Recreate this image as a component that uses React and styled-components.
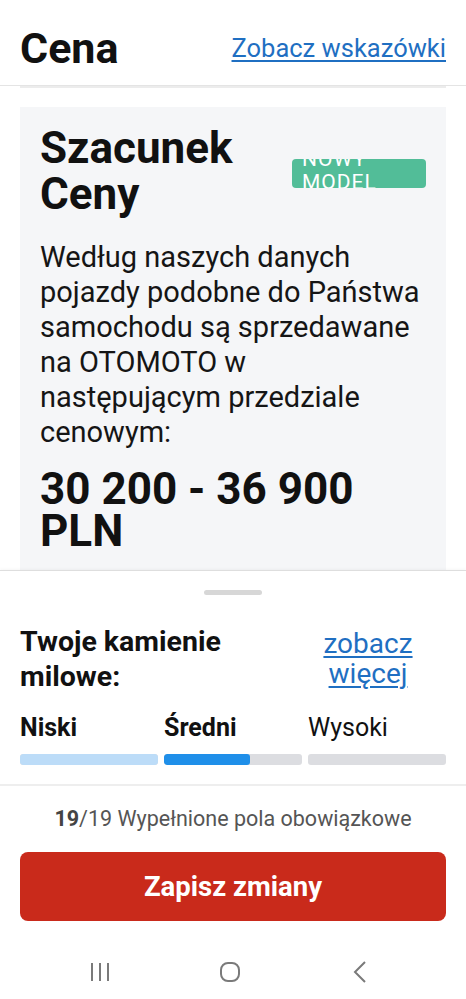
import React from "react";
import styled, { createGlobalStyle } from "styled-components";

const GlobalStyle = createGlobalStyle`
  body {
    margin: 0;
    background: #ffffff;
    font-family: Roboto, "Noto Sans", sans-serif;
    color: #111111;
  }
`;

const Screen = styled.div`
  width: 466px;
  height: 999px;
  display: flex;
  flex-direction: column;
  overflow: hidden;
`;

const Scroll = styled.div`
  flex: 1 1 auto;
  min-height: 0;
  overflow: hidden;
`;

const Header = styled.div`
  height: 86px;
  box-sizing: border-box;
  padding: 12px 20px 2px;
  display: flex;
  align-items: center;
  justify-content: space-between;
  border-bottom: 1px solid #e4e4e4;
`;

const PageTitle = styled.h1`
  margin: 0;
  font-size: 43px;
  font-weight: 700;
  line-height: 50px;
  color: #111;
`;

const Link = styled.a`
  color: #1f6fc2;
  text-decoration: underline;
  text-underline-offset: 3px;
  text-decoration-thickness: 1.5px;
  font-size: ${(p) => p.size || 25.5}px;
  line-height: ${(p) => p.lh || 30}px;
  text-align: ${(p) => p.align || "left"};
`;

const CardEdge = styled.div`
  margin: 0 20px;
  height: 2px;
  background: #ececec;
`;

const Card = styled.div`
  margin: 19px 20px 0;
  background: #f5f6f8;
  padding: 18px 20px 20px;
`;

const TitleRow = styled.div`
  display: flex;
  align-items: center;
  justify-content: space-between;
`;

const CardTitle = styled.h2`
  margin: 0;
  font-size: 44px;
  font-weight: 700;
  line-height: 46px;
  color: #111;
`;

const Badge = styled.div`
  width: 134px;
  height: 29px;
  margin-top: 5px;
  box-sizing: border-box;
  padding: 0 10px;
  border-radius: 4px;
  background: #52bd98;
  color: #ffffff;
  overflow: hidden;
`;

const BadgeText = styled.div`
  margin-top: -11px;
  font-size: 21px;
  line-height: 23px;
  letter-spacing: 1px;
  text-transform: uppercase;
`;

const Description = styled.p`
  margin: 23px 0 0;
  font-size: 29px;
  line-height: 35px;
  color: #151515;
`;

const Price = styled.div`
  margin-top: 18px;
  font-size: 44px;
  font-weight: 700;
  line-height: 42px;
  color: #111;
`;

const Sheet = styled.div`
  flex: 0 0 auto;
  background: #ffffff;
  border-top: 1px solid #dedede;
  box-shadow: 0 -1px 3px rgba(0, 0, 0, 0.04);
`;

const Handle = styled.div`
  width: 58px;
  height: 5px;
  border-radius: 3px;
  background: #d7d7d7;
  margin: 19px auto 0;
`;

const Milestones = styled.div`
  padding: 29px 20px 19px;
  border-bottom: 2px solid #eeeeee;
`;

const MilestoneHead = styled.div`
  display: grid;
  grid-template-columns: 1fr 156px;
  align-items: center;
`;

const SectionTitle = styled.div`
  font-size: 28.5px;
  font-weight: 700;
  line-height: 35px;
  color: #111;
`;

const Levels = styled.div`
  margin-top: 19px;
  display: grid;
  grid-template-columns: repeat(3, 1fr);
  gap: 6px;
`;

const Level = styled.div`
  display: flex;
  flex-direction: column;
`;

const LevelName = styled.div`
  font-size: 25px;
  line-height: 30px;
  font-weight: ${(p) => (p.bold ? 700 : 400)};
  color: #111;
`;

const Track = styled.div`
  margin-top: 11px;
  height: 11px;
  border-radius: 3px;
  background: #dcdde1;
  overflow: hidden;
`;

const Fill = styled.div`
  height: 100%;
  border-radius: 3px;
  background: ${(p) => p.color};
`;

const Footer = styled.div`
  padding: 21px 20px 0;
`;

const Counter = styled.div`
  text-align: center;
  font-size: 21.5px;
  line-height: 24px;
  color: #555555;

  b {
    color: #444444;
    font-weight: 700;
  }
`;

const SaveButton = styled.button`
  margin-top: 21px;
  width: 100%;
  height: 69px;
  border: none;
  border-radius: 8px;
  background: #c92a1b;
  color: #ffffff;
  font-family: Roboto, "Noto Sans", sans-serif;
  font-size: 27.5px;
  font-weight: 700;
  cursor: pointer;
`;

const NavBar = styled.div`
  margin-top: 24px;
  height: 54px;
  display: flex;
  align-items: center;
  justify-content: center;
  gap: 90px;
  padding-right: 6px;
`;

const NavIcon = styled.div`
  width: 40px;
  display: flex;
  justify-content: center;
  color: #7a7a7a;
`;

const levels = [
  { name: "Niski", bold: true, fill: 100, color: "#bcdcf8" },
  { name: "Średni", bold: true, fill: 62, color: "#1f8fe9" },
  { name: "Wysoki", bold: false, fill: 0, color: "#1f8fe9" },
];

export default function App() {
  return (
    <Screen>
      <GlobalStyle />
      <Scroll>
        <Header>
          <PageTitle>Cena</PageTitle>
          <Link href="#">Zobacz wskazówki</Link>
        </Header>
        <CardEdge />
        <Card>
          <TitleRow>
            <CardTitle>
              Szacunek
              <br />
              Ceny
            </CardTitle>
            <Badge>
              <BadgeText>Nowy model</BadgeText>
            </Badge>
          </TitleRow>
          <Description>
            Według naszych danych pojazdy podobne do Państwa samochodu są
            sprzedawane na OTOMOTO w<br />
            następującym przedziale cenowym:
          </Description>
          <Price>30 200 - 36 900 PLN</Price>
        </Card>
      </Scroll>

      <Sheet>
        <Handle />
        <Milestones>
          <MilestoneHead>
            <SectionTitle>Twoje kamienie milowe:</SectionTitle>
            <Link href="#" size={28} lh={30} align="center">
              zobacz
              <br />
              więcej
            </Link>
          </MilestoneHead>
          <Levels>
            {levels.map((l) => (
              <Level key={l.name}>
                <LevelName bold={l.bold}>{l.name}</LevelName>
                <Track>
                  <Fill color={l.color} style={{ width: `${l.fill}%` }} />
                </Track>
              </Level>
            ))}
          </Levels>
        </Milestones>
        <Footer>
          <Counter>
            <b>19</b>/19 Wypełnione pola obowiązkowe
          </Counter>
          <SaveButton>Zapisz zmiany</SaveButton>
        </Footer>
        <NavBar>
          <NavIcon>
            <svg width="22" height="20" viewBox="0 0 22 20" fill="none" stroke="currentColor" strokeWidth="2">
              <path d="M3 1v18M11 1v18M19 1v18" />
            </svg>
          </NavIcon>
          <NavIcon>
            <svg width="22" height="22" viewBox="0 0 22 22" fill="none" stroke="currentColor" strokeWidth="2">
              <rect x="2" y="2" width="18" height="18" rx="7" />
            </svg>
          </NavIcon>
          <NavIcon>
            <svg width="16" height="22" viewBox="0 0 16 22" fill="none" stroke="currentColor" strokeWidth="2">
              <path d="M13 1 3 11l10 10" />
            </svg>
          </NavIcon>
        </NavBar>
      </Sheet>
    </Screen>
  );
}
